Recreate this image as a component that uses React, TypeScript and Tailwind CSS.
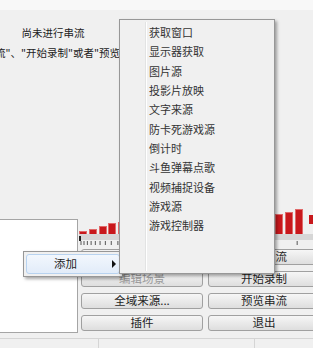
import React from "react";

const font = { fontFamily: '"Noto Sans CJK SC", "Microsoft YaHei", sans-serif' };

const barHeights = [3, 5, 8, 11, 12, 12, 13, 13, 14, 14, 15, 15, 16, 16, 17, 17, 18, 18, 19, 19, 20, 22, 25];

const menuItems = [
  "获取窗口",
  "显示器获取",
  "图片源",
  "投影片放映",
  "文字来源",
  "防卡死游戏源",
  "倒计时",
  "斗鱼弹幕点歌",
  "视频捕捉设备",
  "游戏源",
  "游戏控制器",
];

function Btn({ label, disabled }: { label: string; disabled?: boolean }) {
  return (
    <div
      className={
        "h-[16px] rounded-[3px] border border-[#a0a0a0] bg-gradient-to-b from-[#f6f6f6] to-[#dedede] flex items-center justify-center text-[11.5px] leading-none whitespace-nowrap " +
        (disabled ? "text-[#9a9a9a]" : "text-[#1e1e1e]")
      }
    >
      {label}
    </div>
  );
}

function Ticks() {
  const xs: number[] = [];
  let x = 2;
  let step = 3;
  while (x < 234) {
    xs.push(x);
    x += step;
    step = step * 1.12;
  }
  return (
    <svg width="234" height="8" className="block">
      {xs.map((t, i) => (
        <line key={i} x1={t} x2={t} y1={1} y2={5} stroke="#555" strokeWidth="1" />
      ))}
    </svg>
  );
}

export default function App() {
  return (
    <div className="relative w-[313px] h-[348px] overflow-hidden bg-[#f0f0f0] text-[#222]" style={font}>
      {/* preview area */}
      <div className="h-[10px] bg-[#f8f8f8]" />
      <div className="h-[190px] pt-[16px] overflow-hidden">
        <div className="w-[106px] text-center text-[10.5px] leading-[14px]">尚未进行串流</div>
        <div className="mt-[6px] whitespace-nowrap text-[10.5px] leading-[14px] ml-[-5px]">
          流"、"开始录制"或者"预览串流"
        </div>
      </div>

      {/* lower area */}
      <div className="flex">
        <div className="w-[78px] shrink-0 pt-[19px]">
          <div className="h-[114px] bg-white border-y border-r border-[#a5a5a5]" />
        </div>
        <div className="flex-1 min-w-0 pl-[1px]">
          {/* meter */}
          <div className="h-[34px] flex items-end gap-[1.8px] relative">
            {barHeights.map((h, i) => (
              <div
                key={i}
                className="w-[8px] shrink-0 bg-[#c8181c] border border-[#e06a6a] border-b-0"
                style={{ height: h }}
              />
            ))}
            <div className="absolute left-[230px] top-[15px] w-[5px] h-[9px] bg-[#c8181c]" />
          </div>
          <div className="h-[6px] bg-[#d6d6d6] relative">
            <div className="absolute left-0 top-[2px] w-[2px] h-[5px] bg-[#222]" />
          </div>
          <Ticks />
          <div className="grid grid-cols-[122px_112px] gap-x-[5px] gap-y-[6px] pl-[2px] mt-[1px]">
            <Btn label="场景设置" />
            <Btn label="开始串流" />
            <Btn label="编辑场景" disabled />
            <Btn label="开始录制" />
            <Btn label="全域来源..." />
            <Btn label="预览串流" />
            <Btn label="插件" />
            <Btn label="退出" />
          </div>
        </div>
      </div>

      {/* status bar */}
      <div className="absolute left-0 right-0 bottom-0 h-[10px] border-t border-[#d5d5d5] flex">
        <div className="w-[99px] border-r border-[#d5d5d5]" />
        <div className="w-[156px] border-r border-[#d5d5d5]" />
        <div className="flex-1" />
      </div>

      {/* context menu: 添加 */}
      <div className="absolute left-[23px] top-[251px] w-[100px] h-[26px] bg-[#f0f0f0] border border-[#979797] shadow-[2px_2px_3px_rgba(0,0,0,0.35)] p-[2px]">
        <div className="h-[20px] rounded-[3px] border border-[#b8d3f0] bg-gradient-to-b from-[#f2f7fd] to-[#e2ecf9] flex items-center relative">
          <span className="ml-[27px] text-[11.5px] leading-none text-[#1e1e1e]">添加</span>
          <span className="absolute left-[85px] top-[5px] w-0 h-0 border-y-[4px] border-y-transparent border-l-[4px] border-l-[#111]" />
        </div>
      </div>

      {/* submenu */}
      <div className="absolute left-[119px] top-[19px] w-[156px] h-[255px] bg-[#f0f0f0] border border-[#979797] shadow-[2px_2px_3px_rgba(0,0,0,0.35)] pt-[3px]">
        <div className="absolute left-[25px] top-[2px] bottom-[2px] w-[1px] bg-[#e2e3e3]" />
        <div className="absolute left-[26px] top-[2px] bottom-[2px] w-[1px] bg-white" />
        {menuItems.map((m) => (
          <div key={m} className="h-[19.3px] flex items-center pl-[29px] text-[11px] leading-none text-[#333]">
            {m}
          </div>
        ))}
      </div>
    </div>
  );
}
